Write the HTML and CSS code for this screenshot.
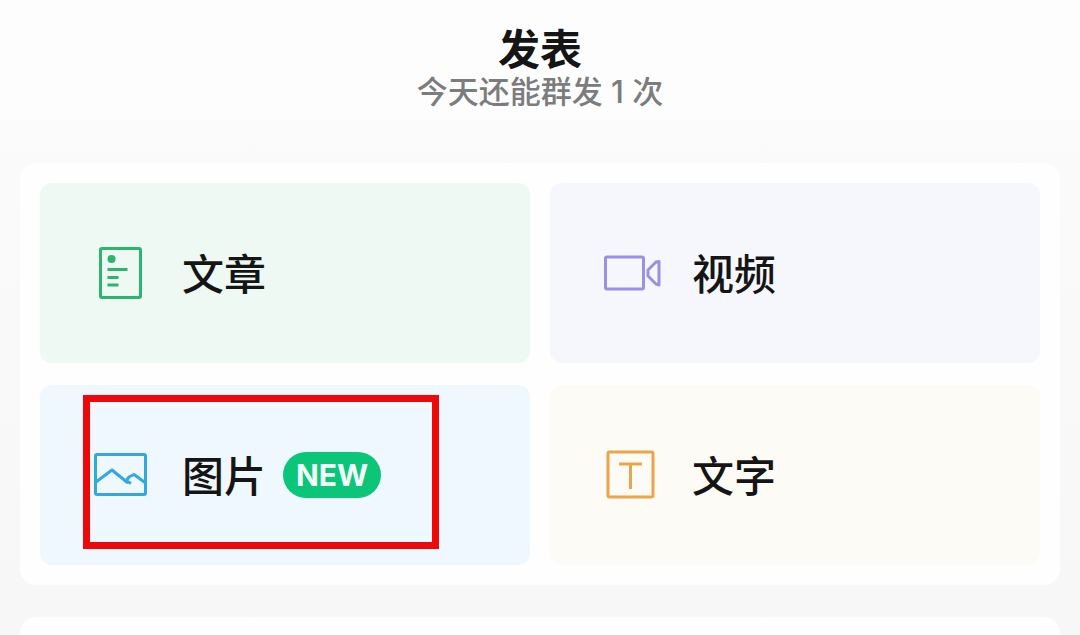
FILE: index.html
```
<!DOCTYPE html>
<html lang="zh-CN">
<head>
    <meta charset="UTF-8">
    <meta name="viewport" content="width=device-width, initial-scale=1.0">
    <title>发表</title>
    <link rel="stylesheet" href="styles.css">
</head>
<body>
    <header class="header">
        <h1 class="title">发表</h1>
        <p class="quota">今天还能群发 1 次</p>
    </header>

    <main class="content">
        <section class="panel types">
            <button type="button" class="tile article">
                <svg class="icon" viewBox="0 0 60 60" aria-hidden="true">
                    <rect x="10.5" y="5.5" width="40" height="49" rx="1.5"/>
                    <circle class="dot" cx="21.5" cy="16" r="4"/>
                    <path d="M17.5 26.5h20M17.5 34.5h11M17.5 42h11"/>
                </svg>
                <span class="label">文章</span>
            </button>
            <button type="button" class="tile video">
                <svg class="icon" viewBox="0 0 60 60" aria-hidden="true">
                    <rect x="5.5" y="14" width="38" height="32" rx="1.5"/>
                    <path d="M59 18.5v23.5l-3-1l-8-8v-6l8-8z"/>
                </svg>
                <span class="label">视频</span>
            </button>
            <button type="button" class="tile image">
                <svg class="icon" viewBox="0 0 60 60" aria-hidden="true">
                    <rect x="5.5" y="9.5" width="50" height="40" rx="1.5"/>
                    <path d="M6 37L22 25L38 38M36 36L39 32L44 29.5L55 37.5M36 35.5l5 3"/>
                </svg>
                <span class="label">图片</span>
                <span class="badge">NEW</span>
                <span class="highlight"></span>
            </button>
            <button type="button" class="tile text">
                <svg class="icon" viewBox="0 0 60 60" aria-hidden="true">
                    <rect x="8" y="7" width="45" height="45" rx="1.5"/>
                    <path d="M19 19h23M30.5 19v25"/>
                </svg>
                <span class="label">文字</span>
            </button>
        </section>
        <section class="panel"></section>
    </main>
</body>
</html>
```
FILE: styles.css
```
* {
    box-sizing: border-box;
}

body {
    margin: 0;
    min-height: 100vh;
    background: linear-gradient(180deg, #fbfbfb 0%, #f7f7f7 100%);
    color: #151515;
    font-family: Inter, "Noto Sans CJK SC", sans-serif;
    display: flex;
    flex-direction: column;
}

.header {
    height: 120px;
    padding-top: 26px;
    background-color: #fdfdfd;
    text-align: center;
}

.title {
    margin: 0;
    font-size: 42px;
    line-height: 48px;
    font-weight: 700;
}

.quota {
    margin: 0;
    color: #7c7c7c;
    font-size: 31px;
    line-height: 36px;
    font-weight: 500;
}

.content {
    flex: 1;
    display: flex;
    flex-direction: column;
    gap: 32px;
    padding: 43px 20px 0;
}

.panel {
    background-color: #fefefe;
    border-radius: 16px;
}

.panel:last-child {
    flex: 1;
    border-radius: 16px 16px 0 0;
}

.types {
    display: grid;
    grid-template-columns: 1fr 1fr;
    gap: 22px 20px;
    padding: 20px;
}

.tile {
    position: relative;
    display: flex;
    align-items: center;
    height: 180px;
    padding: 0 50px;
    border: none;
    border-radius: 12px;
    color: inherit;
    font-family: inherit;
    cursor: pointer;
}

.icon {
    width: 60px;
    height: 60px;
    margin-right: 32px;
    fill: none;
    stroke: currentColor;
    stroke-width: 3;
    stroke-linejoin: round;
    overflow: visible;
}

.dot {
    fill: currentColor;
    stroke: none;
}

.label {
    padding-top: 4px;
    color: #151515;
    font-size: 42px;
    line-height: 48px;
    font-weight: 500;
}

.article {
    background-color: #eef9f3;
}

.article .icon {
    color: #2db56f;
}

.video {
    background-color: #f6f7fd;
}

.video .icon {
    color: #9a91e2;
}

.image {
    background-color: #f0f8ff;
}

.image .icon {
    color: #35a7df;
}

.text {
    background-color: #fcfbf6;
}

.text .icon {
    color: #eba64b;
}

.badge {
    margin-left: 17px;
    width: 98px;
    border-radius: 23px;
    background-color: #0bc679;
    color: #f4fffa;
    font-size: 30px;
    line-height: 46px;
    font-weight: 700;
    text-align: center;
}

.highlight {
    position: absolute;
    top: 10px;
    left: 43px;
    width: 356px;
    height: 154px;
    border: 7px solid #ee0809;
}
```
